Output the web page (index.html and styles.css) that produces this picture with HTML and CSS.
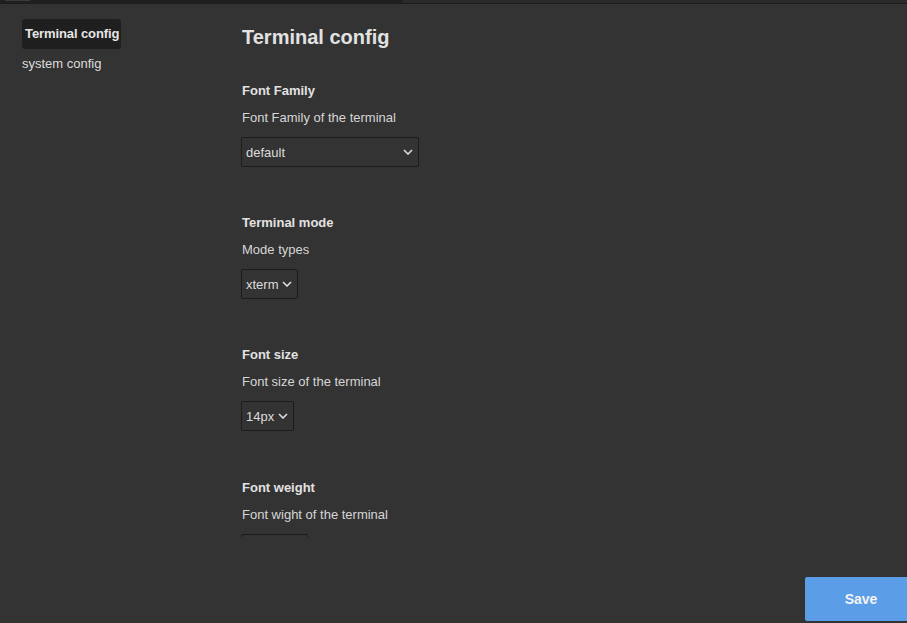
FILE: index.html
```html
<!DOCTYPE html>
<html lang="en">
<head>
<meta charset="utf-8">
<title>Settings</title>
<link rel="stylesheet" href="styles.css">
</head>
<body>
<div class="topbar">
  <div class="tab-active"><span class="tab-mark"></span></div>
  <div class="tab-rest"></div>
</div>
<div class="layout">
  <nav class="sidebar">
    <a class="nav-item active">Terminal config</a>
    <a class="nav-item">system config</a>
  </nav>
  <main class="content">
    <h2 class="page-title">Terminal config</h2>

    <section class="setting">
      <h3 class="setting-title">Font Family</h3>
      <p class="setting-desc">Font Family of the terminal</p>
      <div class="select-wrap w-family">
        <select class="select"><option>default</option></select>
        <svg class="chev" width="10" height="6" viewBox="0 0 10 6"><path d="M1 1l4 4 4-4" fill="none" stroke="#dcdcdc" stroke-width="1.6"/></svg>
      </div>
    </section>

    <section class="setting">
      <h3 class="setting-title">Terminal mode</h3>
      <p class="setting-desc">Mode types</p>
      <div class="select-wrap w-mode">
        <select class="select"><option>xterm</option></select>
        <svg class="chev" width="10" height="6" viewBox="0 0 10 6"><path d="M1 1l4 4 4-4" fill="none" stroke="#dcdcdc" stroke-width="1.6"/></svg>
      </div>
    </section>

    <section class="setting">
      <h3 class="setting-title">Font size</h3>
      <p class="setting-desc">Font size of the terminal</p>
      <div class="select-wrap w-size">
        <select class="select"><option>14px</option></select>
        <svg class="chev" width="10" height="6" viewBox="0 0 10 6"><path d="M1 1l4 4 4-4" fill="none" stroke="#dcdcdc" stroke-width="1.6"/></svg>
      </div>
    </section>

    <section class="setting">
      <h3 class="setting-title">Font weight</h3>
      <p class="setting-desc">Font wight of the terminal</p>
      <div class="select-wrap w-weight">
        <select class="select"><option>normal</option></select>
        <svg class="chev" width="10" height="6" viewBox="0 0 10 6"><path d="M1 1l4 4 4-4" fill="none" stroke="#dcdcdc" stroke-width="1.6"/></svg>
      </div>
    </section>
  </main>
</div>
<footer class="footer">
  <button class="save-btn">Save</button>
</footer>
</body>
</html>
```

FILE: styles.css
```css
* { box-sizing: border-box; }
html, body {
  margin: 0;
  height: 100%;
  background: #333333;
  color: #dcdcdc;
  font-family: "Liberation Sans", Arial, sans-serif;
  overflow: hidden;
}
body {
  display: flex;
  flex-direction: column;
}
.topbar {
  display: flex;
  height: 4px;
  border-bottom: 1px solid #1c1c1c;
  flex: none;
}
.tab-active {
  width: 403px;
  background: #1f1f1f;
  position: relative;
}
.tab-mark {
  position: absolute;
  left: 5px;
  top: 0;
  width: 25px;
  height: 1px;
  background: #3a3a3a;
}
.tab-rest {
  flex: 1;
  background: #2a2a2a;
}
.layout {
  display: flex;
  height: 533px;
  overflow: hidden;
  flex: none;
}
.sidebar {
  width: 220px;
  padding: 15px 0 0 22px;
  display: flex;
  flex-direction: column;
  align-items: flex-start;
  flex: none;
}
.nav-item {
  font-size: 13px;
  line-height: 16px;
  color: #dcdcdc;
  padding: 7px 2px 7px 3px;
  border-radius: 3px;
  cursor: pointer;
}
.nav-item.active {
  background: #1f1f1f;
  font-weight: bold;
  color: #e6e6e6;
  letter-spacing: -0.1px;
}
.nav-item + .nav-item {
  padding: 0;
  margin-top: 7px;
}
.content {
  flex: 1;
  padding: 21px 0 0 22px;
}
.page-title {
  margin: 0;
  font-size: 20px;
  line-height: 24px;
  font-weight: bold;
  color: #e2e2e2;
}
.setting {
  margin-top: 34px;
}
.setting + .setting {
  margin-top: 48px;
}
.setting:last-child {
  margin-top: 49px;
}
.setting-title {
  margin: 0;
  font-size: 13px;
  line-height: 16px;
  font-weight: bold;
  color: #e2e2e2;
}
.setting-desc {
  margin: 11px 0 0;
  font-size: 13px;
  line-height: 16px;
  color: #d6d6d6;
}
.select-wrap {
  position: relative;
  margin-top: 11px;
  height: 30px;
  margin-left: -1px;
}
.select {
  appearance: none;
  -webkit-appearance: none;
  width: 100%;
  height: 30px;
  background: #333333;
  color: #dcdcdc;
  border: 1px solid #1c1c1c;
  border-radius: 2px;
  font-family: "Liberation Sans", Arial, sans-serif;
  font-size: 13px;
  padding: 0 0 0 4px;
  outline: none;
}
.chev {
  position: absolute;
  right: 6px;
  top: 12px;
  pointer-events: none;
}
.w-family { width: 178px; }
.w-mode { width: 57px; }
.w-size { width: 53px; }
.w-weight { width: 67px; }
.footer {
  flex: 1;
  display: flex;
  justify-content: flex-end;
  align-items: flex-end;
  padding-bottom: 2px;
}
.save-btn {
  width: 112px;
  height: 44px;
  margin-right: -10px;
  background: #5b9de6;
  color: #f4f4f4;
  border: none;
  border-radius: 2px 0 0 2px;
  font-family: "Liberation Sans", Arial, sans-serif;
  font-size: 14px;
  font-weight: bold;
  cursor: pointer;
}
```
